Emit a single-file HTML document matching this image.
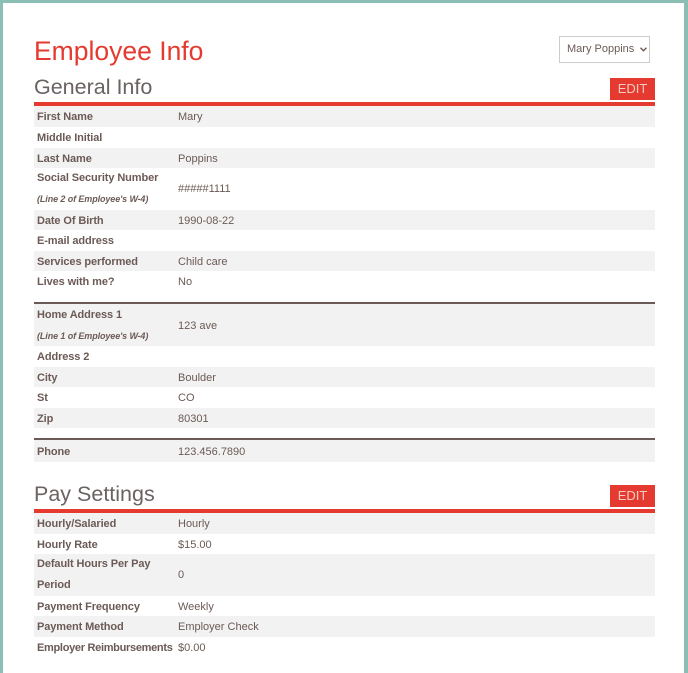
<!DOCTYPE html>
<html><head><meta charset="utf-8"><style>
body{margin:0;width:688px;height:661px;background:#8bbfb6;overflow:hidden;font-family:"Liberation Sans",sans-serif;color:#6b5a55;}
.p{position:absolute;left:3px;top:3px;width:681px;height:670px;background:#fff;}
.a{position:absolute;}
.r{position:absolute;left:34px;width:621px;font-size:11px;}
.g{background:#f2f2f2;}
.l{position:absolute;left:3px;font-weight:bold;font-size:11px;letter-spacing:-0.1px;top:1px;white-space:nowrap;}
.v{position:absolute;left:144px;top:1px;}
.s{font-style:italic;font-size:9px;}
.edit{position:absolute;left:610px;width:45px;height:22px;background:#e53a2f;color:#f6c8c3;font-size:13px;line-height:22px;text-align:center;}
.red{position:absolute;left:34px;width:621px;height:4px;background:#e53a2f;}
.br{position:absolute;left:34px;width:621px;height:2px;background:#6b5a55;}
h{position:absolute;left:34px;font-size:21.5px;color:#6b6262;white-space:nowrap;}
</style></head><body>
<div class="p"></div>
<div class="a" style="left:34px;top:36px;font-size:26.5px;color:#e53a2f;white-space:nowrap;">Employee Info</div>
<div class="a" style="left:559px;top:36px;width:91px;height:27px;border:1px solid #ccc;background:#fff;font-size:11px;line-height:25px;box-sizing:border-box;padding-left:7px;color:#6b5a55;white-space:nowrap;"><span>Mary Poppins</span><svg style="position:absolute;left:80px;top:10px" width="7" height="5" viewBox="0 0 7 5"><path d="M0.5 0.8 L3.5 3.8 L6.5 0.8" fill="none" stroke="#6b5a55" stroke-width="1.4"/></svg></div>
<h style="top:75px">General Info</h>
<div class="edit" style="top:78px">EDIT</div>
<div class="red" style="top:102px"></div>

<div class="r g" style="top:106px;height:21px;line-height:21px"><span class="l">First Name</span><span class="v">Mary</span></div>
<div class="r" style="top:127px;height:21px;line-height:21px"><span class="l">Middle Initial</span></div>
<div class="r g" style="top:148px;height:20px;line-height:20px"><span class="l">Last Name</span><span class="v">Poppins</span></div>
<div class="r" style="top:168px;height:42px;"><span class="l" style="top:4px">Social Security Number</span><span class="l s" style="top:26px">(Line 2 of Employee's W-4)</span><span class="v" style="top:15px">#####1111</span></div>
<div class="r g" style="top:210px;height:20px;line-height:20px"><span class="l">Date Of Birth</span><span class="v">1990-08-22</span></div>
<div class="r" style="top:230px;height:21px;line-height:21px"><span class="l">E-mail address</span></div>
<div class="r g" style="top:251px;height:20px;line-height:20px"><span class="l">Services performed</span><span class="v">Child care</span></div>
<div class="r" style="top:271px;height:21px;line-height:21px"><span class="l">Lives with me?</span><span class="v">No</span></div>

<div class="br" style="top:302px"></div>
<div class="r g" style="top:304px;height:42px;"><span class="l" style="top:5px">Home Address 1</span><span class="l s" style="top:27px">(Line 1 of Employee's W-4)</span><span class="v" style="top:16px">123 ave</span></div>
<div class="r" style="top:346px;height:21px;line-height:21px"><span class="l">Address 2</span></div>
<div class="r g" style="top:367px;height:20px;line-height:20px"><span class="l">City</span><span class="v">Boulder</span></div>
<div class="r" style="top:387px;height:21px;line-height:21px"><span class="l">St</span><span class="v">CO</span></div>
<div class="r g" style="top:408px;height:20px;line-height:20px"><span class="l">Zip</span><span class="v">80301</span></div>

<div class="br" style="top:438px"></div>
<div class="r g" style="top:440px;height:22px;line-height:22px"><span class="l">Phone</span><span class="v">123.456.7890</span></div>

<h style="top:482px">Pay Settings</h>
<div class="edit" style="top:485px">EDIT</div>
<div class="red" style="top:509px"></div>
<div class="r g" style="top:513px;height:21px;line-height:21px"><span class="l">Hourly/Salaried</span><span class="v">Hourly</span></div>
<div class="r" style="top:534px;height:20px;line-height:20px"><span class="l">Hourly Rate</span><span class="v">$15.00</span></div>
<div class="r g" style="top:554px;height:42px;"><span class="l" style="top:4px">Default Hours Per Pay</span><span class="l" style="top:25px">Period</span><span class="v" style="top:15px">0</span></div>
<div class="r" style="top:596px;height:20px;line-height:20px"><span class="l">Payment Frequency</span><span class="v">Weekly</span></div>
<div class="r g" style="top:616px;height:21px;line-height:21px"><span class="l">Payment Method</span><span class="v">Employer Check</span></div>
<div class="r" style="top:637px;height:20px;line-height:20px"><span class="l" style="letter-spacing:-0.3px">Employer Reimbursements</span><span class="v">$0.00</span></div>
</body></html>
